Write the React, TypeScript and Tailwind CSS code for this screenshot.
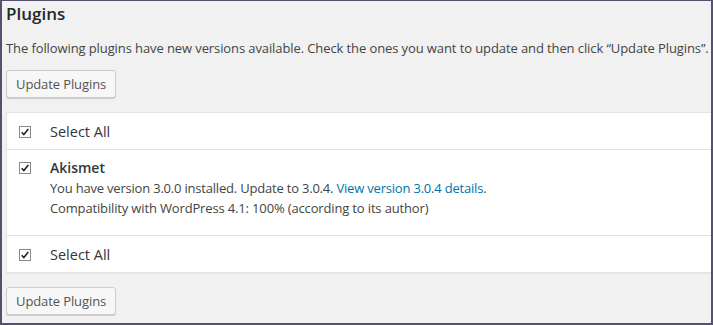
import React from 'react';

const CheckBox = () => (
  <span className="flex h-3 w-3 shrink-0 items-center justify-center border border-[#8a8a8a] bg-white">
    <svg viewBox="0 0 12 12" className="h-[10px] w-[10px]">
      <path d="M2 6.2 L4.6 9 L10 2.4" fill="none" stroke="#1e1e1e" strokeWidth="1.8" />
    </svg>
  </span>
);

const UpdateButton = () => (
  <button className="h-7 rounded-[3px] border border-[#cccccc] bg-[#f7f7f7] px-[9px] text-[13px] leading-[26px] tracking-[-0.1px] text-[#555555] shadow-[0_1px_0_#cccccc]">
    Update Plugins
  </button>
);

export default function App() {
  return (
    <div
      className="h-[325px] w-[713px] overflow-hidden border-b-2 border-l-2 border-r-2 border-t border-[#55506f] bg-[#f1f1f1] pl-1 text-[#444444]"
      style={{ fontFamily: '"Open Sans", "Liberation Sans", sans-serif' }}
    >
      <h2 className="mt-[2px] text-[17px] font-semibold leading-[22px] text-[#23282d]">Plugins</h2>
      <p className="mt-[13px] whitespace-nowrap text-[13px] leading-[20px] tracking-[-0.1px]">
        The following plugins have new versions available. Check the ones you want to update and then click “Update Plugins”.
      </p>
      <div className="mt-[12px]">
        <UpdateButton />
      </div>
      <div className="mt-[14px] mr-[-1px] border border-[#e5e5e5] bg-white shadow-[0_1px_1px_rgba(0,0,0,0.04)]">
        <div className="flex items-center border-b border-[#e1e1e1] pb-[7px] pt-[9px] pl-3">
          <CheckBox />
          <span className="ml-[19px] text-[14.5px] leading-[20px] text-[#32373c]">Select All</span>
        </div>
        <div className="flex items-start border-b border-[#e1e1e1] pb-[17px] pt-[7px] pl-3">
          <div className="mt-[5px]">
            <CheckBox />
          </div>
          <div className="ml-[19px] text-[13px] leading-[20px] tracking-[-0.15px] text-[#444444]">
            <div className="text-[14px] font-semibold leading-[21px] tracking-normal text-[#32373c]">Akismet</div>
            <div className="tracking-[-0.2px]">
              You have version 3.0.0 installed. Update to 3.0.4.{' '}
              <a className="text-[#0073aa]" href="#">View version 3.0.4 details</a>.
            </div>
            <div>Compatibility with WordPress 4.1: 100% (according to its author)</div>
          </div>
        </div>
        <div className="flex items-center pb-[7px] pt-[9px] pl-3">
          <CheckBox />
          <span className="ml-[19px] text-[14.5px] leading-[20px] text-[#32373c]">Select All</span>
        </div>
      </div>
      <div className="mt-[14px]">
        <UpdateButton />
      </div>
    </div>
  );
}
